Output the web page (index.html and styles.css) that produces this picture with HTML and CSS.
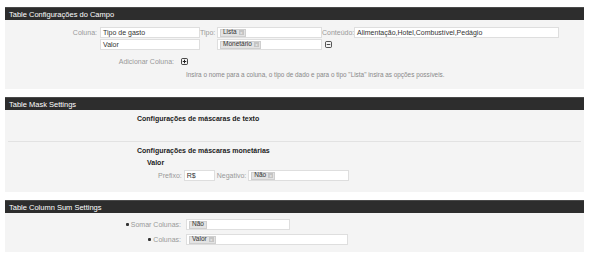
FILE: index.html
```html
<!DOCTYPE html>
<html lang="pt">
<head>
<meta charset="utf-8">
<link rel="stylesheet" href="styles.css">
</head>
<body>
<div class="page">
  <section class="panel">
    <div class="panel-head">Table Configurações do Campo</div>
    <div class="panel-body body-campo">
      <div class="grid">
        <div class="lbl">Coluna:</div>
        <div class="inp">Tipo de gasto</div>
        <div class="lbl">Tipo:</div>
        <div class="inp"><span class="tag">Lista<span class="x">x</span></span></div>
        <div class="lbl">Conteúdo:</div>
        <div class="inp">Alimentação,Hotel,Combustível,Pedágio</div>

        <div></div>
        <div class="inp">Valor</div>
        <div></div>
        <div class="inp"><span class="tag">Monetário<span class="x">x</span></span></div>
        <div class="icon-cell">
          <svg class="ico" viewBox="0 0 8 8" width="7" height="7"><rect x="0.5" y="0.5" width="7" height="7" rx="1.5" fill="none" stroke="#333" stroke-width="1"/><line x1="2" y1="4" x2="6" y2="4" stroke="#333" stroke-width="1"/></svg>
        </div>
        <div></div>
      </div>
      <div class="add-row">
        <span class="add-lbl">Adicionar Coluna:</span>
        <svg class="ico" viewBox="0 0 8 8" width="7" height="7"><rect x="0.5" y="0.5" width="7" height="7" rx="1.5" fill="none" stroke="#222" stroke-width="1"/><line x1="2" y1="4" x2="6" y2="4" stroke="#222" stroke-width="1.2"/><line x1="4" y1="2" x2="4" y2="6" stroke="#222" stroke-width="1.2"/></svg>
      </div>
      <p class="help">Insira o nome para a coluna, o tipo de dado e para o tipo "Lista" insira as opções possíveis.</p>
    </div>
  </section>

  <section class="panel">
    <div class="panel-head">Table Mask Settings</div>
    <div class="panel-body body-mask">
      <h3 class="sub sub-first">Configurações de máscaras de texto</h3>
      <hr class="sep">
      <h3 class="sub">Configurações de máscaras monetárias</h3>
      <h4 class="field-name">Valor</h4>
      <div class="mask-row">
        <span class="lbl">Prefixo:</span>
        <div class="inp inp-prefix">R$</div>
        <span class="lbl">Negativo:</span>
        <div class="inp inp-neg"><span class="tag">Não<span class="x">x</span></span></div>
      </div>
    </div>
  </section>

  <section class="panel">
    <div class="panel-head">Table Column Sum Settings</div>
    <div class="panel-body body-sum">
      <div class="sum-row">
        <span class="lbl sum-lbl"><span class="req"></span>Somar Colunas:</span>
        <div class="inp inp-somar"><span class="tag plain">Não</span></div>
      </div>
      <div class="sum-row">
        <span class="lbl sum-lbl"><span class="req"></span>Colunas:</span>
        <div class="inp inp-cols"><span class="tag">Valor<span class="x">x</span></span></div>
      </div>
    </div>
  </section>
</div>
</body>
</html>
```

FILE: styles.css
```css
* { box-sizing: border-box; }
html, body { margin: 0; padding: 0; background: #fff; }
body {
  font-family: "Liberation Sans", Arial, sans-serif;
  font-size: 7px;
  color: #333;
}
.page { padding: 7px 5px 0 5px; }
.panel { margin-bottom: 8px; }
.panel-head {
  height: 13px;
  line-height: 13px;
  background: #2d2d2d;
  border-top: 1px solid #4a4a4a;
  color: #fff;
  font-size: 7.5px;
  padding-left: 4px;
}
.panel-body { background: #f4f4f4; }

.lbl { color: #999; text-align: right; white-space: nowrap; }
.inp {
  height: 11px;
  background: #fff;
  border: 1px solid #dedede;
  padding: 0 2px;
  display: flex;
  align-items: center;
  color: #333;
  white-space: nowrap;
  overflow: hidden;
}
.tag {
  display: inline-flex;
  align-items: center;
  height: 8px;
  background: #e3e3e3;
  border: 1px solid #cfcfcf;
  padding: 0 1px 0 2px;
  font-size: 6.5px;
  color: #333;
  line-height: 1;
}
.tag.plain { padding-right: 2px; }
.x {
  display: inline-block;
  width: 5px;
  height: 5px;
  margin-left: 2px;
  background: #c4c4c4;
  color: #fff;
  font-size: 4px;
  line-height: 5px;
  text-align: center;
}

/* section 1 */
.body-campo { height: 69px; padding-top: 7px; }
.grid {
  display: grid;
  grid-template-columns: 95px 100px 17px 105px 32px 205px;
  row-gap: 1px;
  align-items: center;
}
.grid .lbl { padding-right: 3px; }
.icon-cell { padding-left: 3px; display: flex; align-items: center; }
.ico { display: block; }
.add-row {
  display: flex;
  align-items: center;
  margin-top: 6px;
  height: 10px;
}
.add-lbl { width: 176px; text-align: right; color: #999; padding-right: 7px; }
.help {
  margin: 5px 0 0 181px;
  color: #888;
  font-size: 6.4px;
}

/* section 2 */
.body-mask { height: 82px; padding-top: 4px; }
.sub {
  margin: 0 0 0 132px;
  font-size: 7px;
  font-weight: bold;
  color: #222;
  line-height: 10px;
}
.sep {
  margin: 17px 3px 4px 3px;
  border: 0;
  border-top: 1px solid #e2e2e2;
  height: 0;
}
.field-name {
  margin: 2px 0 0 142px;
  font-size: 7px;
  font-weight: bold;
  color: #222;
  line-height: 10px;
}
.mask-row {
  display: flex;
  align-items: center;
  gap: 2px;
  margin: 2px 0 0 153px;
}
.inp-prefix { width: 31px; }
.inp-neg { width: 101px; }

/* section 3 */
.body-sum { height: 39px; padding-top: 6px; }
.sum-row {
  display: flex;
  align-items: center;
  margin-bottom: 4px;
}
.sum-lbl {
  width: 181px;
  padding-right: 5px;
  display: flex;
  justify-content: flex-end;
  align-items: center;
}
.req {
  display: inline-block;
  width: 3px;
  height: 3px;
  background: #333;
  border-radius: 1px;
  margin-right: 2px;
}
.inp-somar { width: 104px; }
.inp-cols { width: 162px; }
```
